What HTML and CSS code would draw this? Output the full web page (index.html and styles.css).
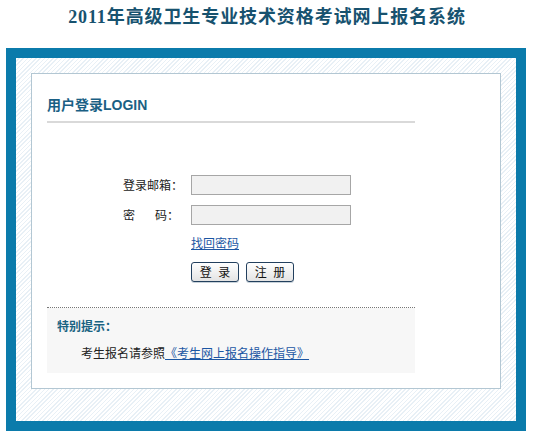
FILE: index.html
```html
<!DOCTYPE html>
<html lang="zh-CN">
<head>
<meta charset="utf-8">
<title>2011年高级卫生专业技术资格考试网上报名系统</title>
<link rel="stylesheet" href="styles.css">
</head>
<body>
<h1 class="title">2011年高级卫生专业技术资格考试网上报名系统</h1>
<div class="frame">
  <div class="panel">
    <h2 class="heading">用户登录LOGIN</h2>
    <form class="form">
      <label class="label" for="email">登录邮箱：</label>
      <input class="input" id="email" type="text">
      <label class="label" for="pwd">密<span class="gap"></span>码：</label>
      <input class="input" id="pwd" type="password">
      <div class="field-link"><a href="#" class="link">找回密码</a></div>
      <div class="buttons">
        <button type="button" class="btn">登 录</button>
        <button type="button" class="btn">注 册</button>
      </div>
    </form>
    <div class="tips">
      <div class="tips-title">特别提示：</div>
      <div class="tips-text">考生报名请参照<a href="#" class="link">《考生网上报名操作指导》</a></div>
    </div>
  </div>
</div>
</body>
</html>
```
FILE: styles.css
```css
html, body {
  margin: 0;
  padding: 0;
  background: #fff;
}
body {
  font-family: "Noto Sans CJK SC", "Liberation Sans", sans-serif;
  font-size: 12px;
  color: #222;
}
.title {
  margin: 0;
  padding-top: 6px;
  height: 22px;
  line-height: 22px;
  font-family: "Liberation Serif", "Noto Sans CJK SC", serif;
  font-size: 18px;
  font-weight: bold;
  letter-spacing: 0.9px;
  color: #17526f;
  text-align: center;
}
.frame {
  margin: 20px 0 0 6px;
  width: 470px;
  border: 10px solid #0b7bab;
  padding: 15px 15px 32px;
  background: repeating-linear-gradient(135deg, #ffffff 0 1.9px, #e8f0f6 1.9px 3px);
}
.panel {
  background: #fff;
  border: 1px solid #b3c7d3;
  padding: 0 15px 15px;
}
.heading {
  margin: 0;
  width: 368px;
  padding: 21px 0 6px;
  line-height: 20px;
  font-size: 14px;
  font-weight: bold;
  font-family: "Liberation Sans", "Noto Sans CJK SC", sans-serif;
  color: #1a5f84;
  border-bottom: 2px solid #d9d9d9;
}
.form {
  margin: 52px 0 0;
  width: 368px;
  display: grid;
  grid-template-columns: 144px 160px;
  row-gap: 10px;
}
.label {
  padding-left: 76px;
  line-height: 20px;
  height: 20px;
  color: #222;
  white-space: nowrap;
}
.gap {
  display: inline-block;
  width: 20px;
}
.input {
  box-sizing: border-box;
  width: 160px;
  height: 20px;
  margin: 0;
  border: 1px solid #a6a6a6;
  background: #f1f1f1;
  padding: 0 3px;
}
.field-link {
  grid-column: 2;
  line-height: 16px;
}
.link {
  color: #1b56a3;
  text-decoration: underline;
}
.buttons {
  grid-column: 2;
  margin-top: 1px;
  display: flex;
  gap: 7px;
}
.btn {
  box-sizing: border-box;
  width: 48px;
  height: 20px;
  margin: 0;
  padding: 0;
  font-family: "Noto Sans CJK SC", sans-serif;
  font-size: 12px;
  line-height: 18px;
  word-spacing: 4px;
  color: #111;
  border: 1px solid #23405e;
  border-radius: 3px;
  background: linear-gradient(#ffffff, #e4e4e4);
  box-shadow: 0 1px 0 #c8d2da;
}
.tips {
  margin-top: 25px;
  width: 368px;
  box-sizing: border-box;
  border-top: 1px dotted #777;
  background: #f7f7f7;
  background-clip: padding-box;
  padding: 8px 10px 10px;
}
.tips-title {
  line-height: 20px;
  font-weight: bold;
  color: #1a6382;
}
.tips-text {
  margin-top: 7px;
  line-height: 20px;
  padding-left: 24px;
  color: #222;
}
```
